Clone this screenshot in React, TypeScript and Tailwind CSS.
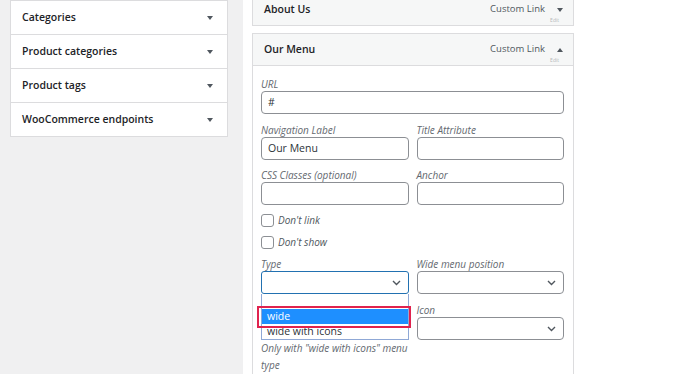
import React from "react";

function Tri({ up = false }: { up?: boolean }) {
  return (
    <svg width="6" height="4" viewBox="0 0 6 4" className="shrink-0">
      <polygon points={up ? "0,4 6,4 3,0" : "0,0 6,0 3,4"} fill="#50575e" />
    </svg>
  );
}

function Chevron() {
  return (
    <svg width="9" height="6" viewBox="0 0 9 6" className="shrink-0">
      <polyline points="1,1 4.5,4.5 8,1" fill="none" stroke="#50575e" strokeWidth="1.4" />
    </svg>
  );
}

function Label({ children }: { children: React.ReactNode }) {
  return <div className="h-[14px] leading-[14px] text-[10px] italic text-[#646970] whitespace-nowrap">{children}</div>;
}

function Input({ value = "" }: { value?: string }) {
  return (
    <div className="h-[23px] border border-[#8c8f94] rounded-[4px] bg-white px-[6px] flex items-center text-[10.5px] text-[#2c3338]">
      {value}
    </div>
  );
}

function Select({ focused = false }: { focused?: boolean }) {
  return (
    <div
      className={
        focused
          ? "h-[23px] border border-[#2271b1] rounded-[3px] bg-white pr-[7px] flex items-center justify-end"
          : "h-[23px] border border-[#8c8f94] rounded-[4px] bg-white pr-[7px] flex items-center justify-end"
      }
    >
      <Chevron />
    </div>
  );
}

function LeftRow({ title, last = false }: { title: string; last?: boolean }) {
  return (
    <div
      className={
        last
          ? "h-[33px] flex items-center justify-between pl-[11px] pr-[14px]"
          : "h-[34px] border-b border-[#dcdcde] flex items-center justify-between pl-[11px] pr-[14px]"
      }
    >
      <span className="text-[10.5px] font-semibold text-[#1d2327]">{title}</span>
      <Tri />
    </div>
  );
}

function CardHeader({ title, up = false }: { title: string; up?: boolean }) {
  return (
    <div className="h-[31px] relative flex items-center justify-between pl-[11px] pr-[10px] bg-[#f6f7f7]">
      <span className="text-[10.5px] font-semibold text-[#1d2327]">{title}</span>
      <div className="flex items-center gap-[12px]">
        <span className="text-[9.5px] text-[#50575e]">Custom Link</span>
        <Tri up={up} />
      </div>
      <span className="absolute right-[14px] top-[23px] text-[5px] leading-[6px] text-[#b4b7ba]">Edit</span>
    </div>
  );
}

export default function App() {
  return (
    <div className="w-[700px] h-[374px] overflow-hidden bg-[#f0f0f1] flex font-['Open_Sans',sans-serif] text-[#1d2327]">
      <div className="w-[243px] shrink-0 pl-[10px] pr-[15px]">
        <div className="bg-white border border-[#dcdcde]">
          <LeftRow title="Categories" />
          <LeftRow title="Product categories" />
          <LeftRow title="Product tags" />
          <LeftRow title="WooCommerce endpoints" last />
        </div>
      </div>

      <div className="flex-1 bg-white pl-[9px] pr-[126px]">
        <div className="-mt-[7px] border border-[#dcdcde]">
          <CardHeader title="About Us" />
        </div>

        <div className="mt-[7px] border border-[#dcdcde] h-[400px]">
          <div className="border-b border-[#dcdcde]">
            <CardHeader title="Our Menu" up />
          </div>
          <div className="bg-white pl-[8px] pr-[9px] pt-[11px]">
            <Label>URL</Label>
            <Input value="#" />

            <div className="mt-[9px] grid grid-cols-2 gap-x-[8px]">
              <div>
                <Label>Navigation Label</Label>
                <Input value="Our Menu" />
              </div>
              <div>
                <Label>Title Attribute</Label>
                <Input />
              </div>
            </div>

            <div className="mt-[8px] grid grid-cols-2 gap-x-[8px]">
              <div>
                <Label>CSS Classes (optional)</Label>
                <Input />
              </div>
              <div>
                <Label>Anchor</Label>
                <Input />
              </div>
            </div>

            <div className="mt-[8px] h-[14px] flex items-center gap-[4px]">
              <span className="w-[13px] h-[13px] border border-[#8c8f94] rounded-[3px] bg-white shrink-0" />
              <span className="text-[10px] italic text-[#50575e]">Don't link</span>
            </div>
            <div className="mt-[8px] h-[14px] flex items-center gap-[4px]">
              <span className="w-[13px] h-[13px] border border-[#8c8f94] rounded-[3px] bg-white shrink-0" />
              <span className="text-[10px] italic text-[#50575e]">Don't show</span>
            </div>

            <div className="mt-[8px] grid grid-cols-2 gap-x-[8px]">
              <div className="relative z-10">
                <Label>Type</Label>
                <div className="relative">
                  <Select focused />
                  <div className="absolute left-0 top-full w-full bg-white border-x border-b border-[#8fa8d6] text-[10.5px]">
                    <div className="h-[15px]" />
                    <div className="h-[15px] bg-[#1e8fff] text-white pl-[5px] leading-[15px]">wide</div>
                    <div className="h-[15px] pl-[5px] leading-[15px] text-[#2c3338]">wide with icons</div>
                  </div>
                  <div className="absolute left-[-4px] top-[35px] w-[154px] h-[22px] border-2 border-[#e0234e]" />
                </div>
              </div>
              <div>
                <Label>Wide menu position</Label>
                <Select />
              </div>

              <div />
              <div className="mt-[9px]">
                <Label>Icon</Label>
                <Select />
              </div>

              <div className="text-[10px] italic text-[#646970] leading-[17px] whitespace-nowrap">
                Only with "wide with icons" menu
                <br />
                type
              </div>
              <div />
            </div>
          </div>
        </div>
      </div>
    </div>
  );
}
